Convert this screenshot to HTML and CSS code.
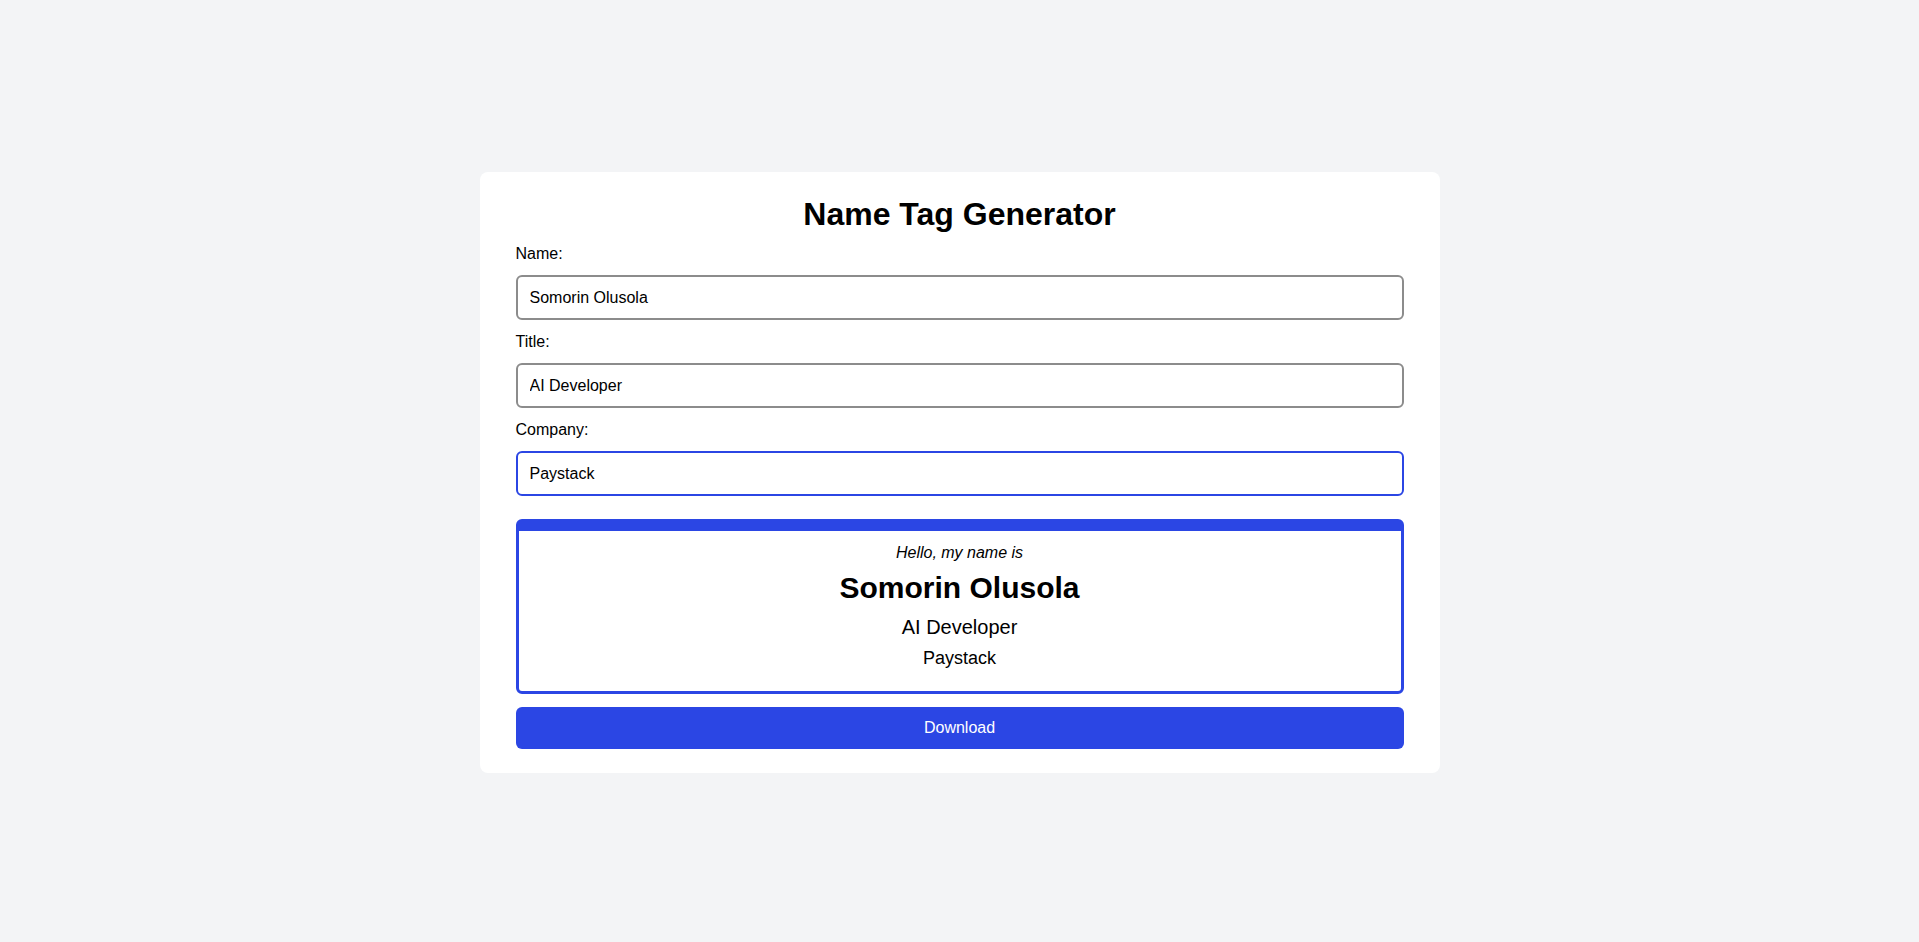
FILE: index.html
```html
<!DOCTYPE html>
<html lang="en">
<head>
<meta charset="utf-8">
<title>Name Tag Generator</title>
<link rel="stylesheet" href="styles.css">
</head>
<body>
<main class="page">
  <section class="card">
    <h1 class="heading">Name Tag Generator</h1>
    <form class="form">
      <label class="label" for="name">Name:</label>
      <input class="field" id="name" type="text" value="Somorin Olusola">
      <label class="label" for="title">Title:</label>
      <input class="field" id="title" type="text" value="AI Developer">
      <label class="label" for="company">Company:</label>
      <input class="field field-active" id="company" type="text" value="Paystack" autofocus>
    </form>
    <div class="tag">
      <p class="tag-hello">Hello, my name is</p>
      <p class="tag-name">Somorin Olusola</p>
      <p class="tag-title">AI Developer</p>
      <p class="tag-company">Paystack</p>
    </div>
    <button class="download" type="button">Download</button>
  </section>
</main>
</body>
</html>
```

FILE: styles.css
```css
* { box-sizing: border-box; }

html, body {
  margin: 0;
  padding: 0;
}

body {
  background: #f3f4f6;
  font-family: "Liberation Sans", Arial, sans-serif;
  color: #000;
  font-size: 16px;
}

.page {
  min-height: 942px;
  display: flex;
  justify-content: center;
  padding-top: 172px;
}

.card {
  width: 960px;
  background: #fff;
  border-radius: 8px;
  padding: 24px 36px 24px;
  display: flex;
  flex-direction: column;
  align-self: flex-start;
}

.heading {
  margin: 0 0 12px;
  font-size: 32px;
  font-weight: 700;
  text-align: center;
  line-height: normal;
}

.form {
  display: flex;
  flex-direction: column;
}

.label {
  display: block;
  font-size: 16px;
  margin-bottom: 12px;
}

.field {
  height: 45px;
  border: 2px solid #8c8c8c;
  border-radius: 6px;
  padding: 0 12px;
  font-family: "Liberation Sans", Arial, sans-serif;
  font-size: 16px;
  color: #000;
  margin: 0 0 13px;
  outline: none;
}

.field:last-child {
  margin-bottom: 0;
}

.field-active,
.field:focus {
  border-color: #2b46e4;
}

.tag {
  margin-top: 23px;
  height: 175px;
  border: 3px solid #2b46e4;
  border-top-width: 12px;
  border-radius: 6px;
  padding: 13px 16px 0;
  text-align: center;
}

.tag p {
  margin: 0;
  line-height: normal;
}

.tag-hello {
  font-size: 16px;
  font-style: italic;
  margin-bottom: 9px !important;
}

.tag-name {
  font-size: 30px;
  font-weight: 700;
  margin-bottom: 11px !important;
}

.tag-title {
  font-size: 20px;
  margin-bottom: 9px !important;
}

.tag-company {
  font-size: 18px;
}

.download {
  margin-top: 13px;
  height: 42px;
  width: 100%;
  border: none;
  border-radius: 6px;
  background: #2b46e4;
  color: #fff;
  font-family: "Liberation Sans", Arial, sans-serif;
  font-size: 16px;
  cursor: pointer;
}
```
